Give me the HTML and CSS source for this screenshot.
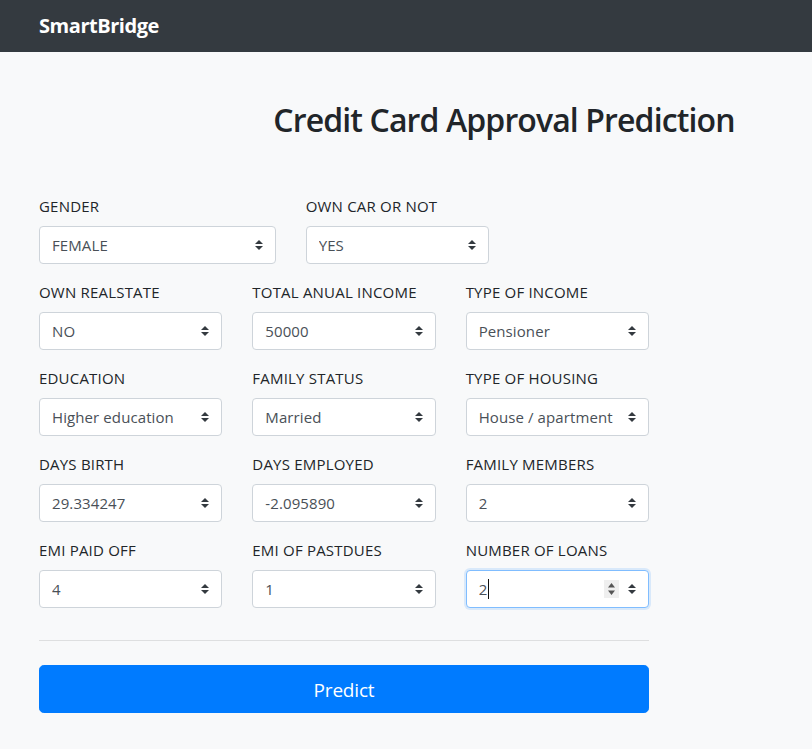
FILE: index.html
```html
<!DOCTYPE html>
<html lang="en">
<head>
<meta charset="utf-8">
<title>Credit Card Approval Prediction</title>
<link rel="stylesheet" href="styles.css">
</head>
<body>
<nav class="navbar"><span class="brand">SmartBridge</span></nav>
<main class="page">
  <h2 class="title">Credit Card Approval Prediction</h2>
  <form class="form">
    <div class="row row-two">
      <div class="group"><div class="label">GENDER</div><div class="select"><span>FEMALE</span><svg class="arrow" width="8" height="10" viewBox="0 0 4 5"><path d="M2 0L0 2h4zm0 5L0 3h4z" fill="#343a40"/></svg></div></div>
      <div class="group"><div class="label">OWN CAR OR NOT</div><div class="select"><span>YES</span><svg class="arrow" width="8" height="10" viewBox="0 0 4 5"><path d="M2 0L0 2h4zm0 5L0 3h4z" fill="#343a40"/></svg></div></div>
    </div>
    <div class="row">
      <div class="group"><div class="label">OWN REALSTATE</div><div class="select"><span>NO</span><svg class="arrow" width="8" height="10" viewBox="0 0 4 5"><path d="M2 0L0 2h4zm0 5L0 3h4z" fill="#343a40"/></svg></div></div>
      <div class="group"><div class="label">TOTAL ANUAL INCOME</div><div class="select"><span>50000</span><svg class="arrow" width="8" height="10" viewBox="0 0 4 5"><path d="M2 0L0 2h4zm0 5L0 3h4z" fill="#343a40"/></svg></div></div>
      <div class="group"><div class="label">TYPE OF INCOME</div><div class="select"><span>Pensioner</span><svg class="arrow" width="8" height="10" viewBox="0 0 4 5"><path d="M2 0L0 2h4zm0 5L0 3h4z" fill="#343a40"/></svg></div></div>
    </div>
    <div class="row">
      <div class="group"><div class="label">EDUCATION</div><div class="select"><span>Higher education</span><svg class="arrow" width="8" height="10" viewBox="0 0 4 5"><path d="M2 0L0 2h4zm0 5L0 3h4z" fill="#343a40"/></svg></div></div>
      <div class="group"><div class="label">FAMILY STATUS</div><div class="select"><span>Married</span><svg class="arrow" width="8" height="10" viewBox="0 0 4 5"><path d="M2 0L0 2h4zm0 5L0 3h4z" fill="#343a40"/></svg></div></div>
      <div class="group"><div class="label">TYPE OF HOUSING</div><div class="select"><span>House / apartment</span><svg class="arrow" width="8" height="10" viewBox="0 0 4 5"><path d="M2 0L0 2h4zm0 5L0 3h4z" fill="#343a40"/></svg></div></div>
    </div>
    <div class="row">
      <div class="group"><div class="label">DAYS BIRTH</div><div class="select"><span>29.334247</span><svg class="arrow" width="8" height="10" viewBox="0 0 4 5"><path d="M2 0L0 2h4zm0 5L0 3h4z" fill="#343a40"/></svg></div></div>
      <div class="group"><div class="label">DAYS EMPLOYED</div><div class="select"><span>-2.095890</span><svg class="arrow" width="8" height="10" viewBox="0 0 4 5"><path d="M2 0L0 2h4zm0 5L0 3h4z" fill="#343a40"/></svg></div></div>
      <div class="group"><div class="label">FAMILY MEMBERS</div><div class="select"><span>2</span><svg class="arrow" width="8" height="10" viewBox="0 0 4 5"><path d="M2 0L0 2h4zm0 5L0 3h4z" fill="#343a40"/></svg></div></div>
    </div>
    <div class="row">
      <div class="group"><div class="label">EMI PAID OFF</div><div class="select"><span>4</span><svg class="arrow" width="8" height="10" viewBox="0 0 4 5"><path d="M2 0L0 2h4zm0 5L0 3h4z" fill="#343a40"/></svg></div></div>
      <div class="group"><div class="label">EMI OF PASTDUES</div><div class="select"><span>1</span><svg class="arrow" width="8" height="10" viewBox="0 0 4 5"><path d="M2 0L0 2h4zm0 5L0 3h4z" fill="#343a40"/></svg></div></div>
      <div class="group"><div class="label">NUMBER OF LOANS</div><div class="select focused"><span class="value">2</span><span class="caret"></span><span class="spin"><svg width="15" height="18" viewBox="0 0 15 18"><rect width="15" height="18" fill="#efefef"/><path d="M7.5 3L4 7.5h7z M7.5 15L4 10.5h7z" fill="#555"/></svg></span><svg class="arrow" width="8" height="10" viewBox="0 0 4 5"><path d="M2 0L0 2h4zm0 5L0 3h4z" fill="#343a40"/></svg></div></div>
    </div>
    <hr class="divider">
    <button type="button" class="btn">Predict</button>
  </form>
</main>
</body>
</html>
```

FILE: styles.css
```css
* { box-sizing: border-box; }
html, body { margin: 0; padding: 0; }
body {
  background: #f8f9fa;
  font-family: "Open Sans", "Noto Sans", sans-serif;
  color: #212529;
  font-size: 16px;
  line-height: 1.5;
  width: 812px;
  height: 749px;
  overflow: hidden;
}
.navbar {
  height: 52px;
  background: #343a40;
  display: flex;
  align-items: center;
  padding-left: 39px;
}
.brand {
  color: #fff;
  font-weight: 700;
  font-size: 20px;
  letter-spacing: -0.45px;
}
.page { padding: 0 0 0 39px; }
.title {
  margin: 48px 0 0 0;
  padding-left: 157px;
  text-align: center;
  font-size: 32px;
  font-weight: 600;
  line-height: 40px;
  letter-spacing: -0.88px;
  color: #212529;
}
.form { width: 610px; margin-top: 54px; }
.row {
  display: grid;
  grid-template-columns: repeat(3, 1fr);
  column-gap: 30px;
}
.row-two { grid-template-columns: 236.67px 183.33px; }
.group { margin-bottom: 16px; }
.label {
  font-size: 15px;
  line-height: 24px;
  margin-bottom: 8px;
  color: #212529;
  letter-spacing: 0.2px;
}
.select {
  height: 38px;
  border: 1px solid #ced4da;
  border-radius: 4px;
  background: #fff;
  display: flex;
  align-items: center;
  padding: 0 12px;
  color: #495057;
  font-size: 15px;
  letter-spacing: 0.1px;
}
.select span:first-child { flex: 1; white-space: nowrap; overflow: hidden; }
.select .arrow { flex: none; margin-left: 4px; }
.focused {
  border-color: #80bdff;
  box-shadow: 0 0 0 2px rgba(0, 123, 255, 0.12);
}
.focused .value { flex: none !important; }
.caret {
  width: 1px;
  height: 20px;
  background: #111;
  margin-left: 1px;
  flex: none;
}
.spin { margin-left: auto; display: flex; margin-right: 5px; }
.divider {
  border: 0;
  border-top: 1px solid rgba(0, 0, 0, 0.1);
  margin: 16px 0 24px 0;
}
.btn {
  display: block;
  width: 100%;
  height: 48px;
  padding-top: 2px;
  background: #007bff;
  border: 1px solid #007bff;
  border-radius: 4.8px;
  color: #fff;
  font-family: "Open Sans", "Noto Sans", sans-serif;
  font-size: 19px;
  letter-spacing: -0.2px;
  cursor: pointer;
}
```
